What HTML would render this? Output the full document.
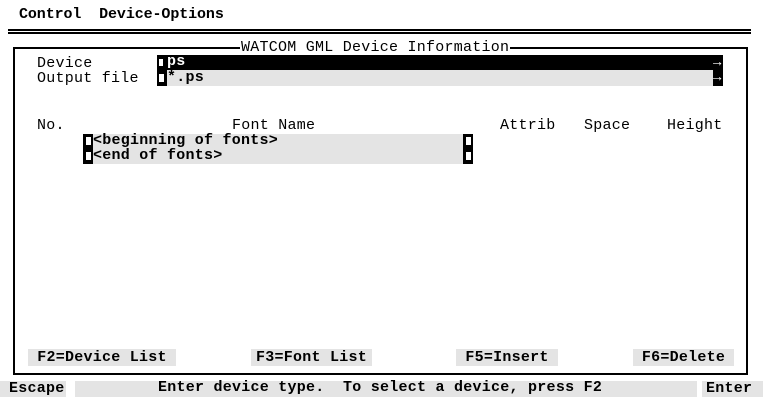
<!DOCTYPE html>
<html><head><meta charset="utf-8"><style>
body{margin:0;width:763px;height:400px;background:#fff;position:relative;overflow:hidden;font-family:"Liberation Mono","DejaVu Sans Mono",monospace;font-size:15px;letter-spacing:0.25px;color:#000}
div{position:absolute;white-space:pre;line-height:16px}
.b{font-weight:bold}
.g{background:#e4e4e4}
.k{background:#000}
.sq{position:absolute;background:#fff}
.ar{font-size:14px;font-weight:bold;color:#fff}
</style></head><body>
<div class="b" style="left:19px;top:7px;letter-spacing:-0.1px">Control  Device-Options</div>
<div style="left:8px;top:29px;width:743px;height:1px;border-top:2px solid #000;border-bottom:2px solid #000"></div>
<!-- box -->
<div style="left:13px;top:47px;width:731px;height:324px;border:2px solid #000"></div>
<div style="left:240px;top:40px;background:#fff;padding:0 1px">WATCOM GML Device Information</div>
<div style="left:37px;top:56px">Device</div>
<div style="left:37px;top:71px">Output file</div>
<div class="k" style="left:157px;top:55px;width:566px;height:15px"></div>
<div class="sq" style="left:159px;top:59px;width:4px;height:7px"></div>
<div class="b" style="left:167px;top:54px;color:#fff">ps</div>
<div class="ar" style="left:713px;top:55px">→</div>
<div class="g" style="left:157px;top:70px;width:566px;height:16px"></div>
<div class="k" style="left:157px;top:70px;width:10px;height:16px"></div>
<div class="sq" style="left:159px;top:74px;width:5px;height:8px"></div>
<div class="b" style="left:167px;top:70px">*.ps</div>
<div class="k" style="left:713px;top:70px;width:10px;height:16px"></div>
<div class="ar" style="left:713px;top:70px">→</div>
<div style="left:37px;top:118px">No.</div>
<div style="left:232px;top:118px">Font Name</div>
<div style="left:500px;top:118px">Attrib</div>
<div style="left:584px;top:118px">Space</div>
<div style="left:667px;top:118px">Height</div>
<div class="g" style="left:83px;top:134px;width:390px;height:30px"></div>
<div class="k" style="left:83px;top:134px;width:10px;height:30px"></div>
<div class="k" style="left:463px;top:134px;width:10px;height:30px"></div>
<div class="sq" style="left:86px;top:137px;width:5px;height:8px"></div>
<div class="sq" style="left:86px;top:152px;width:5px;height:8px"></div>
<div class="sq" style="left:466px;top:137px;width:5px;height:8px"></div>
<div class="sq" style="left:466px;top:152px;width:5px;height:8px"></div>
<div class="b" style="left:93px;top:133px">&lt;beginning of fonts&gt;</div>
<div class="b" style="left:93px;top:148px">&lt;end of fonts&gt;</div>
<!-- buttons -->
<div class="g b" style="left:28px;top:349px;width:148px;height:17px;text-align:center;line-height:17px">F2=Device List</div>
<div class="g b" style="left:251px;top:349px;width:121px;height:17px;text-align:center;line-height:17px">F3=Font List</div>
<div class="g b" style="left:456px;top:349px;width:102px;height:17px;text-align:center;line-height:17px">F5=Insert</div>
<div class="g b" style="left:633px;top:349px;width:101px;height:17px;text-align:center;line-height:17px">F6=Delete</div>
<!-- status -->
<div class="g b" style="left:0px;top:381px;width:66px;height:16px;padding-left:9px;box-sizing:border-box">Escape</div>
<div class="g" style="left:75px;top:381px;width:622px;height:16px"></div>
<div class="b" style="left:158px;top:380px">Enter device type.  To select a device, press F2</div>
<div class="g b" style="left:702px;top:381px;width:61px;height:16px;padding-left:4px;box-sizing:border-box">Enter</div>
</body></html>
